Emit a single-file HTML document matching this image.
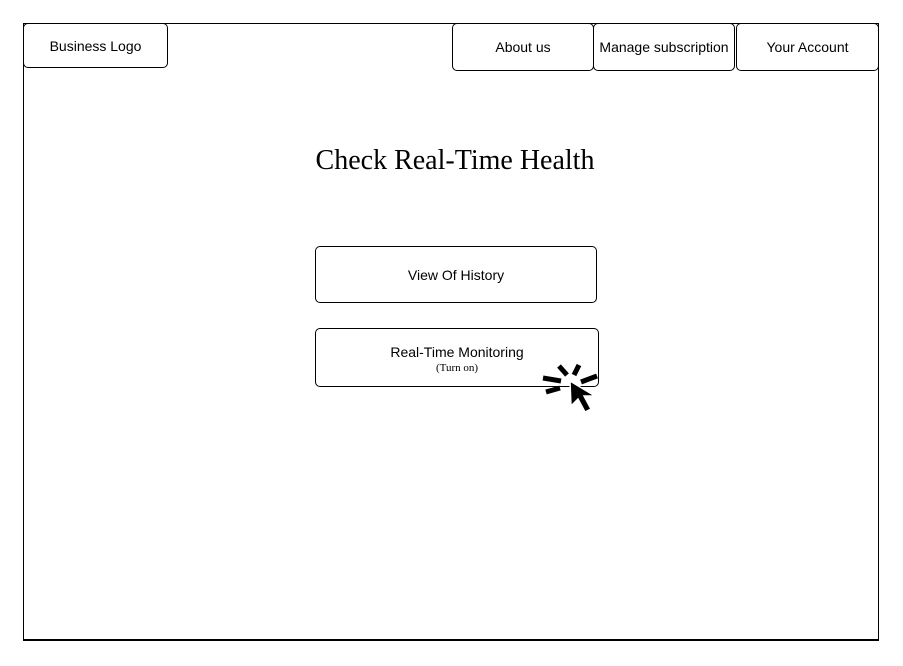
<!DOCTYPE html>
<html><head><style>
body{margin:0;width:903px;height:666px;background:#fff;position:relative;overflow:hidden;font-family:"Liberation Sans",sans-serif;}
.b{position:absolute;box-sizing:border-box;border:1px solid #000;border-radius:5px;display:flex;align-items:center;justify-content:center;font-size:14px;color:#000;flex-direction:column;}
</style></head><body>
<div style="position:absolute;left:23px;top:23px;width:856px;height:618px;box-sizing:border-box;border:1px solid #000;border-bottom-width:2px;"></div>
<div class="b" style="left:23px;top:23px;width:145px;height:45px;background:#fff;">Business Logo</div>
<div class="b" style="left:452px;top:23px;width:142px;height:48px;background:#fff;">About us</div>
<div class="b" style="left:593px;top:23px;width:142px;height:48px;background:#fff;">Manage subscription</div>
<div class="b" style="left:736px;top:23px;width:143px;height:48px;background:#fff;">Your Account</div>
<div style="position:absolute;left:0;width:910px;top:145px;text-align:center;font-family:'Liberation Serif',serif;font-size:28px;">Check Real-Time Health</div>
<div class="b" style="left:315px;top:246px;width:282px;height:57px;">View Of History</div>
<div class="b" style="left:315px;top:328px;width:284px;height:59px;"><div style="margin-top:2px">Real-Time Monitoring</div><div style="font-family:'Liberation Serif',serif;font-size:11px;margin-top:2px">(Turn on)</div></div>
<svg style="position:absolute;left:0;top:0" width="903" height="666">
<g stroke="#000" stroke-width="5" stroke-linecap="butt">
<line x1="559" y1="366" x2="567" y2="375"/>
<line x1="579" y1="365" x2="574" y2="375"/>
<line x1="581" y1="382" x2="597" y2="376"/>
<line x1="543" y1="378" x2="561" y2="381"/>
<line x1="546" y1="392" x2="560" y2="388"/>
</g>
<polygon points="570,381 571,406 578,399 585,412 591,409 584,396 595,396" fill="#000" stroke="#fff" stroke-width="1.5"/>
</svg>
</body></html>
